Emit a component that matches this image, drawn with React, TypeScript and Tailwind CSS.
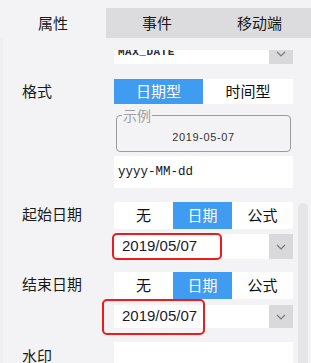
import React from "react";

const cjk = '"Noto Sans CJK SC", "Noto Sans", sans-serif';

function Chevron() {
  return (
    <svg width="10" height="6" viewBox="0 0 10 6" fill="none">
      <path d="M1 1l4 4 4-4" stroke="#7a7a7a" strokeWidth="1.2" />
    </svg>
  );
}

function Select({ value, h }: { value: string; h: string }) {
  return (
    <div className={`flex ${h}`}>
      <div className="flex-1 bg-white flex items-center pl-[8px] text-[15px] text-[#1b1b2b]" style={{ fontFamily: '"Liberation Sans", Arial, sans-serif' }}>
        {value}
      </div>
      <div className="w-[24px] bg-[#d9d9db] flex items-center justify-center">
        <Chevron />
      </div>
    </div>
  );
}

function Tri() {
  return (
    <div className="flex h-[27px] text-[15px]">
      <div className="w-[59px] bg-white flex items-center justify-center text-[#111]">无</div>
      <div className="w-[59px] bg-[#3f9cf0] flex items-center justify-center text-white">日期</div>
      <div className="flex-1 bg-white flex items-center justify-center text-[#111]">公式</div>
    </div>
  );
}

export default function App() {
  return (
    <div className="relative w-[311px] h-[363px] overflow-hidden bg-[#f3f3f5] text-[#1a1a1a]" style={{ fontFamily: cjk }}>
      <div className="h-[8px]" />
      <div className="flex h-[30px] text-[15px]">
        <div className="w-[106px] flex items-center justify-center">属性</div>
        <div className="w-[102px] bg-[#dcdcde] flex items-center justify-center">事件</div>
        <div className="flex-1 bg-[#dcdcde] flex items-center justify-center">移动端</div>
      </div>
      <div className="flex h-[325px]">
        <div className="w-[298px] pr-[5px] border-l-[3px] border-[#efeff1]">
          {/* clipped MAX_DATE select */}
          <div className="flex mt-[12px]">
            <div className="w-[111px]" />
            <div className="w-[179px] h-[14px] overflow-hidden flex">
              <div className="flex-1 bg-white pl-[4px]">
                <div className="-mt-[5px] text-[11px] leading-[14px] font-bold text-[#2a2a3a] tracking-[0.5px]" style={{ fontFamily: '"Liberation Mono", monospace' }}>
                  MAX_DATE
                </div>
              </div>
              <div className="w-[24px] bg-[#d9d9db] flex justify-center pt-[1px]">
                <Chevron />
              </div>
            </div>
          </div>

          {/* 格式 */}
          <div className="flex mt-[15px]">
            <div className="w-[111px] pl-[19px] pt-[2px] text-[15px] leading-[20px]">格式</div>
            <div className="w-[179px]">
              <div className="flex h-[25px] text-[15px]">
                <div className="w-[89px] bg-[#3f9cf0] text-white flex items-center justify-center">日期型</div>
                <div className="flex-1 bg-white text-[#111] flex items-center justify-center">时间型</div>
              </div>
              <fieldset className="mt-[4px] mx-[2px] border border-[#9c9c9c] rounded-[4px] pt-[9px] pb-[8px]">
                <legend className="ml-[5px] px-[1px] text-[14px] leading-[14px] text-[#a0a0a0]">示例</legend>
                <div className="text-center text-[11px] leading-[12px] tracking-[0.6px] text-[#333]" style={{ fontFamily: '"Liberation Sans", Arial, sans-serif' }}>
                  2019-05-07
                </div>
              </fieldset>
              <div className="mt-[4px] h-[32px] bg-white flex items-center pl-[4px] text-[12.5px] text-[#141428]" style={{ fontFamily: '"Liberation Mono", monospace' }}>
                yyyy-MM-dd
              </div>
            </div>
          </div>

          {/* 起始日期 */}
          <div className="flex mt-[14px]">
            <div className="w-[111px] pl-[19px] pt-[2px] text-[15px] leading-[20px]">起始日期</div>
            <div className="w-[179px]">
              <Tri />
              <div className="mt-[5px]">
                <Select value="2019/05/07" h="h-[25px]" />
              </div>
            </div>
          </div>

          {/* 结束日期 */}
          <div className="flex mt-[13px]">
            <div className="w-[111px] pl-[19px] pt-[2px] text-[15px] leading-[20px]">结束日期</div>
            <div className="w-[179px]">
              <Tri />
              <div className="mt-[6px]">
                <Select value="2019/05/07" h="h-[23px]" />
              </div>
            </div>
          </div>

          {/* 水印 */}
          <div className="flex mt-[14px]">
            <div className="w-[111px] pl-[19px] pt-[4px] text-[15px] leading-[20px]">水印</div>
            <div className="w-[179px] h-[30px] bg-white" />
          </div>
        </div>
        <div className="flex-1 flex flex-col pt-[165px]">
          <div className="w-[10px] flex-1 bg-[#e6e6e8] rounded-t-[5px]" />
        </div>
      </div>

      {/* red annotation boxes */}
      <div className="absolute left-[112px] top-[233px] w-[110px] h-[27px] border-[2px] border-[#ee1b1b] rounded-[5px]" />
      <div className="absolute left-[102px] top-[299px] w-[103px] h-[36px] border-[2px] border-[#ee1b1b] rounded-[5px]" />
    </div>
  );
}
